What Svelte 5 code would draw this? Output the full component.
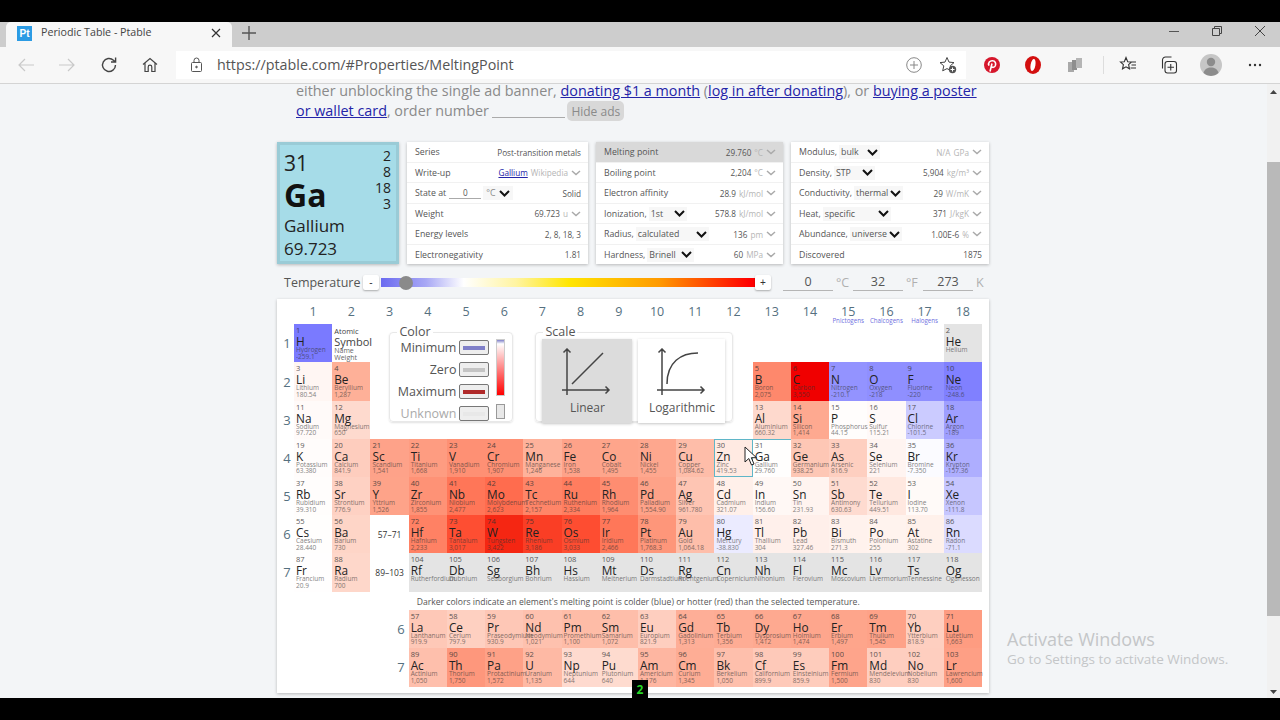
<script>
  // num sym name value (empty value = unknown, shown grey)
  const raw = `1 H Hydrogen -259.1|2 He Helium|3 Li Lithium 180.54|4 Be Beryllium 1,287|5 B Boron 2,075|6 C Carbon 3,550|7 N Nitrogen -210.1|8 O Oxygen -218|9 F Fluorine -220|10 Ne Neon -248.6|11 Na Sodium 97.720|12 Mg Magnesium 650|13 Al Aluminium 660.32|14 Si Silicon 1,414|15 P Phosphorus 44.15|16 S Sulfur 115.21|17 Cl Chlorine -101.5|18 Ar Argon -189|19 K Potassium 63.380|20 Ca Calcium 841.9|21 Sc Scandium 1,541|22 Ti Titanium 1,668|23 V Vanadium 1,910|24 Cr Chromium 1,907|25 Mn Manganese 1,246|26 Fe Iron 1,538|27 Co Cobalt 1,495|28 Ni Nickel 1,455|29 Cu Copper 1,084.62|30 Zn Zinc 419.53|31 Ga Gallium 29.760|32 Ge Germanium 938.25|33 As Arsenic 816.9|34 Se Selenium 221|35 Br Bromine -7.350|36 Kr Krypton -157.36|37 Rb Rubidium 39.310|38 Sr Strontium 776.9|39 Y Yttrium 1,526|40 Zr Zirconium 1,855|41 Nb Niobium 2,477|42 Mo Molybdenum 2,623|43 Tc Technetium 2,157|44 Ru Ruthenium 2,334|45 Rh Rhodium 1,964|46 Pd Palladium 1,554.90|47 Ag Silver 961.780|48 Cd Cadmium 321.07|49 In Indium 156.60|50 Sn Tin 231.93|51 Sb Antimony 630.63|52 Te Tellurium 449.51|53 I Iodine 113.70|54 Xe Xenon -111.8|55 Cs Caesium 28.440|56 Ba Barium 730|57 La Lanthanum 919.9|58 Ce Cerium 797.9|59 Pr Praseodymium 930.9|60 Nd Neodymium 1,021|61 Pm Promethium 1,100|62 Sm Samarium 1,072|63 Eu Europium 821.9|64 Gd Gadolinium 1,313|65 Tb Terbium 1,356|66 Dy Dysprosium 1,412|67 Ho Holmium 1,474|68 Er Erbium 1,497|69 Tm Thulium 1,545|70 Yb Ytterbium 818.9|71 Lu Lutetium 1,663|72 Hf Hafnium 2,233|73 Ta Tantalum 3,017|74 W Tungsten 3,422|75 Re Rhenium 3,186|76 Os Osmium 3,033|77 Ir Iridium 2,466|78 Pt Platinum 1,768.3|79 Au Gold 1,064.18|80 Hg Mercury -38.830|81 Tl Thallium 304|82 Pb Lead 327.46|83 Bi Bismuth 271.3|84 Po Polonium 255|85 At Astatine 302|86 Rn Radon -71.1|87 Fr Francium 20.9|88 Ra Radium 700|89 Ac Actinium 1,050|90 Th Thorium 1,750|91 Pa Protactinium 1,572|92 U Uranium 1,135|93 Np Neptunium 644|94 Pu Plutonium 640|95 Am Americium 1,176|96 Cm Curium 1,345|97 Bk Berkelium 1,050|98 Cf Californium 899.9|99 Es Einsteinium 859.9|100 Fm Fermium 1,500|101 Md Mendelevium 830|102 No Nobelium 830|103 Lr Lawrencium 1,600|104 Rf Rutherfordium|105 Db Dubnium|106 Sg Seaborgium|107 Bh Bohrium|108 Hs Hassium|109 Mt Meitnerium|110 Ds Darmstadtium|111 Rg Roentgenium|112 Cn Copernicium|113 Nh Nihonium|114 Fl Flerovium|115 Mc Moscovium|116 Lv Livermorium|117 Ts Tennessine|118 Og Oganesson`;

  // hot side of the scale, fraction of 3550 °C -> rgb
  const stops = [
    [0, [255, 255, 255]], [0.1, [255, 238, 232]], [0.2, [254, 214, 201]], [0.35, [254, 178, 155]],
    [0.5, [254, 150, 122]], [0.7, [255, 118, 88]], [0.85, [254, 78, 50]], [0.96, [245, 42, 20]], [1, [240, 0, 0]]
  ];

  function colorFor(v) {
    if (v === null) return '#e4e4e4';
    if (v < 0) {
      const c = Math.round(255 - (-v / 273) * 140);
      return `rgb(${c},${c},255)`;
    }
    const t = Math.min(v / 3550, 1);
    for (let i = 1; i < stops.length; i++) {
      if (t <= stops[i][0]) {
        const [a, ca] = stops[i - 1];
        const [b, cb] = stops[i];
        const f = (t - a) / (b - a);
        const m = ca.map((x, k) => Math.round(x + (cb[k] - x) * f));
        return `rgb(${m.join(',')})`;
      }
    }
    return '#f00';
  }

  function place(n) {
    // grid: column 1 is the period label, row 1 the group labels, row 9 the note
    if (n === 1) return [1, 1];
    if (n === 2) return [18, 1];
    if (n <= 4) return [n - 2, 2];
    if (n <= 10) return [n + 8, 2];
    if (n <= 12) return [n - 10, 3];
    if (n <= 18) return [n, 3];
    if (n <= 36) return [n - 18, 4];
    if (n <= 54) return [n - 36, 5];
    if (n <= 56) return [n - 54, 6];
    if (n <= 71) return [n - 53, 9];
    if (n <= 86) return [n - 68, 6];
    if (n <= 88) return [n - 86, 7];
    if (n <= 103) return [n - 85, 10];
    return [n - 100, 7];
  }

  const elements = raw.split('|').map((s) => {
    const [num, sym, name, value] = s.split(' ');
    const [col, row] = place(+num);
    const v = value ? parseFloat(value.replace(/,/g, '')) : null;
    return { num, sym, name, value: value || '', col, row, bg: colorFor(v) };
  });

  const groups = Array.from({ length: 18 }, (_, i) => i + 1);
  const families = { 15: 'Pnictogens', 16: 'Chalcogens', 17: 'Halogens' };
  const periods = [1, 2, 3, 4, 5, 6, 7];

  const cardA = [
    { label: 'Series', value: 'Post-transition metals' },
    { label: 'Write-up', link: 'Gallium', value: 'Wikipedia', faint: true, more: true },
    { label: 'State at', state: true, value: 'Solid' },
    { label: 'Weight', value: '69.723', unit: 'u', more: true },
    { label: 'Energy levels', value: '2, 8, 18, 3' },
    { label: 'Electronegativity', value: '1.81' }
  ];
  const cardB = [
    { label: 'Melting point', value: '29.760', unit: '°C', more: true, on: true },
    { label: 'Boiling point', value: '2,204', unit: '°C', more: true },
    { label: 'Electron affinity', value: '28.9', unit: 'kJ/mol', more: true },
    { label: 'Ionization,', pick: '1st', w: 38, value: '578.8', unit: 'kJ/mol', more: true },
    { label: 'Radius,', pick: 'calculated', w: 73, value: '136', unit: 'pm', more: true },
    { label: 'Hardness,', pick: 'Brinell', w: 47, value: '60', unit: 'MPa', more: true }
  ];
  const cardC = [
    { label: 'Modulus,', pick: 'bulk', w: 41, value: 'N/A', unit: 'GPa', more: true, faintVal: true },
    { label: 'Density,', pick: 'STP', w: 41, value: '5,904', unit: 'kg/m³', more: true },
    { label: 'Conductivity,', pick: 'thermal', w: 49, value: '29', unit: 'W/mK', more: true },
    { label: 'Heat,', pick: 'specific', w: 68, value: '371', unit: 'J/kgK', more: true },
    { label: 'Abundance,', pick: 'universe', w: 52, value: '1.00E-6', unit: '%', more: true },
    { label: 'Discovered', value: '1875' }
  ];
  const cards = [cardA, cardB, cardC];

  const swatches = [
    { label: 'Minimum', c: '#7f7fc8' },
    { label: 'Zero', c: '#c4c4c4' },
    { label: 'Maximum', c: '#b02a2a' },
    { label: 'Unknown', c: '#e8e8e8', off: true }
  ];
</script>

<div class="screen">
  <div class="tabstrip">
    <div class="tab">
      <span class="favicon">Pt</span>
      <span class="tab-title">Periodic Table - Ptable</span>
      <svg class="tab-x" width="10" height="10" viewBox="0 0 10 10"><path d="M1 1l8 8M9 1l-8 8" stroke="#333" stroke-width="1.2" /></svg>
    </div>
    <svg class="tab-plus" width="14" height="14" viewBox="0 0 14 14"><path d="M7 0v14M0 7h14" stroke="#555" stroke-width="1.4" /></svg>
    <div class="win-controls">
      <svg width="12" height="12" viewBox="0 0 12 12"><path d="M1 6.5h10" stroke="#555" /></svg>
      <svg width="12" height="12" viewBox="0 0 12 12" fill="none" stroke="#444"><path d="M1.5 3.5h7v7h-7zM3.5 3.5v-2h7v7h-2" /></svg>
      <svg width="12" height="12" viewBox="0 0 12 12"><path d="M1 1l10 10M11 1L1 11" stroke="#444" /></svg>
    </div>
  </div>

  <div class="toolbar">
    <div class="nav-btns">
      <svg width="18" height="16" viewBox="0 0 18 16" fill="none" stroke="#c9c9c9" stroke-width="1.2"><path d="M17 8H2M8 2L2 8l6 6" /></svg>
      <svg width="18" height="16" viewBox="0 0 18 16" fill="none" stroke="#c9c9c9" stroke-width="1.2"><path d="M1 8h15M10 2l6 6-6 6" /></svg>
      <svg class="reload" width="18" height="18" viewBox="0 0 18 18" fill="none" stroke="#444" stroke-width="1.4"><path d="M15.5 9a6.5 6.5 0 1 1-2-4.7L15.5 6M15.6 1.5V6H11" /></svg>
      <svg class="home" width="16" height="16" viewBox="0 0 16 16" fill="none" stroke="#444" stroke-width="1.2"><path d="M1 7.5L8 1.5l7 6M3 6v8.5h3.2V10a1.8 1.8 0 0 1 3.6 0v4.5H13V6" /></svg>
    </div>
    <div class="address">
      <svg width="13" height="16" viewBox="0 0 13 16" fill="none" stroke="#555"><rect x="1.5" y="5.5" width="10" height="9" rx="1" /><path d="M4 5.5V3.5a2.5 2.5 0 0 1 5 0v2" /><circle cx="6.5" cy="10" r="0.8" fill="#555" /></svg>
      <span class="url">https://ptable.com/#Properties/MeltingPoint</span>
      <svg class="addr-add" width="16" height="16" viewBox="0 0 16 16" fill="none" stroke="#888"><circle cx="8" cy="8" r="7.3" /><path d="M8 4v8M4 8h8" /></svg>
      <svg class="addr-star" width="18" height="18" viewBox="0 0 18 18"><path d="M8 1.5l2 4.6 5 .5-3.8 3.3 1.1 4.9L8 12.6l-4.3 2.2 1.1-4.9L1 6.6l5-.5z" fill="none" stroke="#444" /><circle cx="13.5" cy="13.5" r="3.7" fill="#555" /><path d="M13.5 11.5v4M11.5 13.5h4" stroke="#fff" /></svg>
    </div>
    <div class="ext-btns">
      <svg width="18" height="18" viewBox="0 0 18 18"><circle cx="9" cy="9" r="8" fill="#d6172c" /><path d="M7 15.5l2-8M6 9.6C4.6 6.8 7 4.6 9.5 4.8c2.7.2 3.8 2.6 2.8 5-.8 1.8-3 2-3.8.6" fill="none" stroke="#fff" stroke-width="1.6" /></svg>
      <svg width="16" height="18" viewBox="0 0 16 18"><ellipse cx="8" cy="9" rx="8" ry="9" fill="#d30f0f" /><ellipse cx="8" cy="9" rx="2.4" ry="6" fill="#fff" transform="rotate(10 8 9)" /></svg>
      <svg width="16" height="16" viewBox="0 0 16 16" fill="#a9a9a9"><path d="M1 5h6v10H1z" /><path d="M5 3h5v10H5z" fill="#8e8e8e" /><path d="M9 1h6v10H9z" fill="#b5b5b5" /></svg>
      <span class="ext-div"></span>
      <svg width="18" height="18" viewBox="0 0 18 18" fill="none" stroke="#333" stroke-width="1.1"><path d="M7 1.5l1.7 4.2 3.8.3-2.9 2.6.9 4.2L7 10.8l-3.5 2 .9-4.2L1.5 6l3.8-.3zM12 6h5M12.5 9H17M11.5 12H17" /></svg>
      <svg width="18" height="18" viewBox="0 0 18 18" fill="none" stroke="#333" stroke-width="1.1"><rect x="5" y="5.5" width="11.5" height="11.5" rx="2.5" /><path d="M2.5 12.500V4a3 3 0 0 1 3-3h6M10.750 8v6.500M7.500 11.250H14" /></svg>
      <svg width="22" height="22" viewBox="0 0 22 22"><circle cx="11" cy="11" r="11" fill="#c6c6c6" /><circle cx="11" cy="8" r="4.2" fill="#8c8c8c" /><path d="M3.5 19c1-4 4-5.500 7.500-5.500s6.500 1.500 7.500 5.500a11 11 0 0 1-15 0z" fill="#8c8c8c" /></svg>
      <svg width="14" height="4" viewBox="0 0 14 4" fill="#333"><circle cx="2" cy="2" r="1.2" /><circle cx="7" cy="2" r="1.2" /><circle cx="12" cy="2" r="1.2" /></svg>
    </div>
  </div>

  <div class="viewport">
    <main class="page">
      <p class="ad-note">
        either unblocking the single ad banner, <a href="#d">donating $1 a month</a> (<a href="#l">log in after donating</a>), or <a href="#p">buying a poster</a><br />
        <a href="#p">or wallet card</a>, order number <span class="order-input"></span> <button class="hide-ads">Hide ads</button>
      </p>

      <section class="detail">
        <div class="big-cell">
          <div class="big-left">
            <div class="big-num">31</div>
            <div class="big-sym">Ga</div>
            <div class="big-name">Gallium</div>
            <div class="big-name">69.723</div>
          </div>
          <div class="shells"><span>2</span><span>8</span><span>18</span><span>3</span></div>
        </div>
        {#each cards as card}
          <div class="info-card">
            {#each card as row}
              <div class="info-row" class:on={row.on}>
                <span class="info-label">{row.label}</span>
                {#if row.pick}
                  <span class="pick" style="width:{row.w}px">{row.pick}<svg width="11" height="7" viewBox="0 0 11 7" fill="none" stroke="#111" stroke-width="2"><path d="M1 1l4.5 4.5L10 1" /></svg></span>
                {/if}
                {#if row.state}
                  <span class="state-input">0</span>
                  <span class="pick deg">°C<svg width="11" height="7" viewBox="0 0 11 7" fill="none" stroke="#111" stroke-width="2"><path d="M1 1l4.5 4.5L10 1" /></svg></span>
                {/if}
                <span class="info-val">
                  {#if row.link}<a href="#g">{row.link}</a>{/if}
                  <span class:faint={row.faint || row.faintVal}>{row.value}</span>
                  {#if row.unit}<span class="faint">{row.unit}</span>{/if}
                  {#if row.more}<svg width="10" height="6" viewBox="0 0 10 6" fill="none" stroke="#aaa" stroke-width="1.5"><path d="M1 1l4 3.500L9 1" /></svg>{/if}
                </span>
              </div>
            {/each}
          </div>
        {/each}
      </section>

      <section class="temp-row">
        <span class="temp-label">Temperature</span>
        <button class="step">-</button>
        <div class="slider"><span class="thumb"></span></div>
        <button class="step plus">+</button>
        <div class="temp-fields">
          <span class="temp-input">0</span><span class="temp-unit">°C</span>
          <span class="temp-input">32</span><span class="temp-unit">°F</span>
          <span class="temp-input">273</span><span class="temp-unit">K</span>
        </div>
      </section>

      <section class="table-card">
        <div class="ptable">
          {#each groups as g}
            <div class="group-label" style="grid-column:{g + 1};grid-row:1">
              {g}
              {#if families[g]}<span class="family">{families[g]}</span>{/if}
            </div>
          {/each}
          {#each periods as p}
            <div class="period-label" style="grid-column:1;grid-row:{p + 1}">{p}</div>
          {/each}

          <div class="key" style="grid-column:3;grid-row:2">
            <div class="key-num">Atomic</div>
            <div class="key-sym">Symbol</div>
            <div class="key-sm">Name</div>
            <div class="key-sm">Weight</div>
          </div>

          <div class="legend-area">
            <fieldset class="color-set">
              <legend>Color</legend>
              <div class="swatch-wrap">
                <div class="swatch-rows">
                  {#each swatches as s}
                    <div class="swatch-row" class:off={s.off}>
                      <span>{s.label}</span>
                      <span class="swatch"><i style="background:{s.c}"></i></span>
                    </div>
                  {/each}
                </div>
                <div class="ramps">
                  <span class="ramp"></span>
                  <span class="ramp-unknown"></span>
                </div>
              </div>
            </fieldset>
            <fieldset class="scale-set">
              <legend>Scale</legend>
              <div class="scale-btns">
                <div class="scale-btn on">
                  <svg width="50" height="48" viewBox="0 0 50 48" fill="none" stroke="#444" stroke-width="1.5"><path d="M0 42h47M43.500 38.500L47 42l-3.500 3.500M5 47V1M1.500 4.500L5 1l3.500 3.500M10 36L41 5" /></svg>
                  <span>Linear</span>
                </div>
                <div class="scale-btn">
                  <svg width="50" height="48" viewBox="0 0 50 48" fill="none" stroke="#444" stroke-width="1.5"><path d="M0 42h47M43.500 38.500L47 42l-3.500 3.500M5 47V1M1.500 4.500L5 1l3.500 3.500M10 36C10 14 24 5 41 5" /></svg>
                  <span>Logarithmic</span>
                </div>
              </div>
            </fieldset>
          </div>

          <div class="range" style="grid-column:4;grid-row:7">57–71</div>
          <div class="range" style="grid-column:4;grid-row:8">89–103</div>

          {#each elements as el}
            <div
              class="el"
              class:hover={el.num === '30'}
              class:sel={el.num === '31'}
              style="grid-column:{el.col + 1};grid-row:{el.row + 1};background:{el.bg}"
            >
              <div class="el-num">{el.num}</div>
              <div class="el-sym">{el.sym}</div>
              <div class="el-name">{el.name}</div>
              {#if el.value}<div class="el-val">{el.value}</div>{/if}
            </div>
          {/each}

          <p class="note">Darker colors indicate an element's melting point is colder (blue) or hotter (red) than the selected temperature.</p>
          <div class="period-label sub" style="grid-row:10">6</div>
          <div class="period-label sub" style="grid-row:11">7</div>
        </div>
      </section>
    </main>

    <div class="scrollbar">
      <svg width="7" height="4" viewBox="0 0 7 4" fill="#444"><path d="M3.5 0L7 4H0z" /></svg>
      <span class="scroll-thumb"></span>
      <svg class="scroll-down" width="7" height="4" viewBox="0 0 7 4" fill="#444"><path d="M3.5 4L7 0H0z" /></svg>
    </div>
  </div>

  <div class="blackbar"></div>

  <!-- overlays from the recording: watermark, cursor, key badge -->
  <div class="watermark">
    <div class="wm-big">Activate Windows</div>
    <div class="wm-small">Go to Settings to activate Windows.</div>
  </div>
  <svg class="cursor" width="14" height="20" viewBox="0 0 14 20"><path d="M1 1v15l3.800-3.500L7.500 19l2.500-1-2.700-6.300H12.500z" fill="#fff" stroke="#222" /></svg>
  <div class="key-badge">2</div>
</div>

<style>
  :global(body) {
    margin: 0;
    background: #000;
  }

  .screen {
    position: relative;
    width: 1280px;
    height: 720px;
    padding-top: 22px;
    box-sizing: border-box;
    background: #000;
    display: flex;
    flex-direction: column;
    overflow: hidden;
    font-family: "Open Sans", "Noto Sans", sans-serif;
    color: #333;
  }

  .tabstrip {
    height: 25px;
    background: #cdcdcd;
    display: flex;
    align-items: center;
    flex-shrink: 0;
  }

  .tab {
    margin-left: 6px;
    width: 226px;
    height: 25px;
    box-sizing: border-box;
    background: #f7f7f7;
    border-radius: 5px 5px 0 0;
    display: flex;
    align-items: center;
    padding: 0 11px 3px;
  }

  .favicon {
    width: 15px;
    height: 15px;
    background: #2b9be4;
    color: #fff;
    font-size: 10px;
    font-weight: 700;
    line-height: 15px;
    text-align: center;
    font-family: "Liberation Sans", sans-serif;
  }

  .tab-title {
    margin: -2px 0 0 9px;
    font-size: 10.7px;
    color: #444;
    flex: 1;
  }

  .tab-plus {
    margin: -3px 0 0 10px;
  }

  .win-controls {
    margin-left: auto;
    margin-right: 14px;
    display: flex;
    gap: 31px;
    margin-top: -7px;
  }

  .toolbar {
    height: 37px;
    background: #f7f7f7;
    border-bottom: 1px solid #d4d4d4;
    box-sizing: border-box;
    display: flex;
    align-items: center;
    flex-shrink: 0;
    padding-left: 17px;
  }

  .nav-btns {
    display: flex;
    align-items: center;
    gap: 23px;
    width: 159px;
  }

  .reload {
    margin-left: 1px;
  }

  .home {
    margin-left: 1px;
  }

  .address {
    width: 790px;
    height: 28px;
    margin-top: -1px;
    background: #fff;
    display: flex;
    align-items: center;
    padding: 0 9px 0 14px;
    box-sizing: border-box;
  }

  .url {
    margin-left: 14px;
    font-size: 14.3px;
    color: #555;
    flex: 1;
  }

  .addr-add {
    margin-right: 17px;
  }

  .ext-btns {
    display: flex;
    align-items: center;
    margin-left: 17px;
    gap: 24px;
  }

  .ext-btns > :nth-child(3) {
    margin-left: 2px;
  }

  .ext-div {
    width: 1px;
    height: 18px;
    background: #ddd;
    margin: 0 -9px 0 -4px;
  }

  .ext-btns > :nth-child(6) {
    margin-left: -1px;
  }

  .ext-btns > :nth-child(7) {
    margin-left: -2px;
  }

  .ext-btns > :nth-child(8) {
    margin-left: 2px;
  }

  .viewport {
    flex: 1;
    min-height: 0;
    display: flex;
    background: #f3f5f7;
  }

  .page {
    flex: 1;
    min-width: 0;
    overflow: hidden;
    padding-left: 277px;
  }

  .ad-note {
    margin: -3px 0 0 19px;
    font-size: 14.35px;
    line-height: 19.5px;
    color: #8a8a8a;
    white-space: nowrap;
  }

  a {
    color: #2424a8;
  }

  .order-input {
    display: inline-block;
    width: 73px;
    height: 14px;
    border-bottom: 1px solid #aaa;
    margin: 0 0 -2px -1px;
  }

  .hide-ads {
    font: inherit;
    font-size: 12px;
    color: #8a8a8a;
    background: #d8d8d8;
    border: 0;
    border-radius: 5px;
    height: 20px;
    width: 57px;
    padding: 0;
    margin-left: -1px;
  }

  .detail {
    display: flex;
    align-items: stretch;
    gap: 8px;
    margin-top: 21px;
    height: 122px;
  }

  .big-cell {
    width: 122px;
    box-sizing: border-box;
    background: #a6dce8;
    border: 3px solid #9acbd6;
    padding: 5px 5px 2px 4px;
    display: flex;
    justify-content: space-between;
    color: #222;
    box-shadow: 0 1px 3px rgba(0, 0, 0, 0.25);
  }

  .big-num {
    font-size: 21px;
    line-height: 26px;
  }

  .big-sym {
    font-size: 32px;
    font-weight: 700;
    line-height: 38px;
    color: #111;
  }

  .big-name {
    font-size: 17px;
    line-height: 23px;
  }

  .shells {
    display: flex;
    flex-direction: column;
    align-items: flex-end;
    font-size: 14px;
    line-height: 16px;
    margin-top: -2px;
  }

  .info-card {
    width: 181px;
    background: #fff;
    box-shadow: 0 1px 3px rgba(0, 0, 0, 0.25);
    display: flex;
    flex-direction: column;
  }

  .info-card:nth-child(3) {
    width: 187px;
  }

  .info-card:nth-child(4) {
    width: 198px;
  }

  .info-row {
    flex: 1;
    display: flex;
    align-items: center;
    padding: 0 7px 0 8px;
    border-bottom: 1px solid #f1f1f1;
    font-size: 8.2px;
    color: #555;
    white-space: nowrap;
  }

  .info-label {
    font-size: 8.8px;
  }

  .info-row:last-child {
    border-bottom: 0;
  }

  .info-row.on {
    background: #d9d9d9;
  }

  .pick {
    display: inline-flex;
    align-items: center;
    justify-content: space-between;
    box-sizing: border-box;
    background: #f7f7f7;
    font-size: 8.8px;
    margin-left: 2px;
    padding: 1px 2px;
  }

  .deg {
    padding: 1px 3px;
    gap: 3px;
    color: #888;
  }

  .state-input {
    width: 32px;
    margin-left: 3px;
    text-align: center;
    border-bottom: 1px solid #aaa;
  }

  .info-val {
    margin-left: auto;
    display: inline-flex;
    align-items: center;
    gap: 3px;
  }

  .faint {
    color: #b5b5b5;
  }

  .temp-row {
    height: 35px;
    box-sizing: border-box;
    padding: 2px 0 0 7px;
    display: flex;
    align-items: center;
  }

  .temp-label {
    font-size: 12.5px;
    color: #555;
    width: 79px;
  }

  .step {
    width: 16px;
    height: 15px;
    padding: 0;
    border: 0;
    background: #fff;
    border-radius: 2px;
    box-shadow: 0 1px 2px rgba(0, 0, 0, 0.3);
    font-size: 10px;
    line-height: 15px;
    color: #333;
    z-index: 1;
  }

  .slider {
    position: relative;
    width: 376px;
    height: 9px;
    margin-left: 2px;
    background: linear-gradient(90deg, #6a6af0 0%, #a8a8f5 12%, #ffffff 22%, #fff4a0 36%, #ffe600 50%, #ff9a00 74%, #f00 98%);
  }

  .thumb {
    position: absolute;
    left: 18px;
    top: -2.5px;
    width: 14px;
    height: 14px;
    border-radius: 50%;
    background: #8a8a8a;
  }

  .plus {
    margin-left: -2px;
  }

  .temp-fields {
    display: flex;
    align-items: center;
    margin-left: 12px;
    font-size: 12.5px;
    color: #555;
  }

  .temp-input {
    width: 50px;
    text-align: center;
    border-bottom: 1px solid #b5b5b5;
    line-height: 16px;
  }

  .temp-unit {
    color: #b0b0b0;
    width: 17px;
    margin-left: 3px;
  }

  .table-card {
    width: 712px;
    height: 394px;
    background: #fff;
    box-shadow: 0 1px 3px rgba(0, 0, 0, 0.25);
    overflow: hidden;
    padding-left: 17px;
    box-sizing: border-box;
  }

  .ptable {
    display: grid;
    grid-template-columns: 0 repeat(18, 38.22px);
    grid-template-rows: 25px repeat(7, 38.2px) 18px repeat(2, 38.5px);
  }

  .group-label {
    position: relative;
    text-align: center;
    font-size: 12.5px;
    line-height: 26px;
    color: #557080;
  }

  .family {
    position: absolute;
    left: -4px;
    right: -4px;
    top: 18px;
    font-size: 6.2px;
    line-height: 8px;
    color: #6f6fe0;
    white-space: nowrap;
  }

  .period-label {
    font-size: 13px;
    color: #557080;
    width: 16px;
    margin-left: -15px;
    display: flex;
    align-items: center;
    justify-content: center;
  }

  .period-label.sub {
    grid-column: 4;
    width: auto;
    margin-left: 0;
    justify-content: flex-end;
    padding-right: 4px;
  }

  .key {
    overflow: visible;
    padding: 2px 0 0 2px;
    color: #444;
    white-space: nowrap;
  }

  .key-num {
    font-size: 7.5px;
    line-height: 9px;
    padding-top: 1px;
  }

  .key-sym {
    font-size: 11px;
    line-height: 11px;
  }

  .key-sm {
    font-size: 7px;
    line-height: 7px;
    color: #666;
  }

  .legend-area {
    grid-column: 4 / 14;
    grid-row: 2 / 5;
    display: flex;
    align-items: flex-start;
    gap: 22px;
    padding: 0 0 0 19px;
    margin-top: 1px;
    z-index: 1;
  }

  fieldset {
    margin: 0;
    padding: 0;
    border: 1px solid #e8e8e8;
    border-radius: 4px;
    box-shadow: 0 1px 2px rgba(0, 0, 0, 0.12);
    background: #fff;
    height: 97px;
    box-sizing: border-box;
  }

  legend {
    font-size: 12.5px;
    line-height: 14px;
    padding: 0 2px;
    margin-left: 7px;
    color: #555;
  }

  .color-set {
    width: 124px;
  }

  .swatch-wrap {
    display: flex;
    padding: 1px 7px 0 0;
    justify-content: space-between;
  }

  .swatch-rows {
    flex: 1;
    display: flex;
    flex-direction: column;
    gap: 7px;
  }

  .swatch-row {
    display: flex;
    align-items: center;
    justify-content: flex-end;
    gap: 3px;
    font-size: 12.5px;
    line-height: 15px;
    color: #555;
    padding-right: 7px;
  }

  .swatch-row.off {
    color: #aaa;
  }

  .swatch {
    width: 30px;
    height: 15px;
    box-sizing: border-box;
    background: #eee;
    border: 1px solid #777;
    border-radius: 2px;
    display: flex;
    align-items: center;
    justify-content: center;
  }

  .swatch i {
    width: 22px;
    height: 4px;
    display: block;
  }

  .ramps {
    width: 9px;
    display: flex;
    flex-direction: column;
    gap: 8px;
    margin-top: -1px;
  }

  .ramp {
    height: 57px;
    border: 1px solid #ccc;
    box-sizing: border-box;
    background: linear-gradient(180deg, #7f7fc8 0, #fff 7%, #f00 100%);
  }

  .ramp-unknown {
    height: 15px;
    border: 1px solid #999;
    box-sizing: border-box;
    background: #e8e8e8;
  }

  .scale-set {
    width: 198px;
  }

  .scale-btns {
    display: flex;
    gap: 6px;
    padding: 0 0 0 6px;
  }

  .scale-btn {
    width: 87px;
    height: 84px;
    box-sizing: border-box;
    padding-top: 9px;
    background: #fff;
    box-shadow: 0 1px 3px rgba(0, 0, 0, 0.2);
    display: flex;
    flex-direction: column;
    align-items: center;
    font-size: 12px;
    color: #555;
    gap: 3px;
  }

  .scale-btn.on {
    width: 90px;
    background: #dcdcdc;
  }

  .range {
    font-size: 8.5px;
    display: flex;
    align-items: center;
    justify-content: center;
    color: #333;
  }

  .el {
    box-sizing: border-box;
    padding: 2px 0 0 2px;
    overflow: visible;
    white-space: nowrap;
    color: #333;
  }

  .el.hover {
    box-shadow: inset 0 0 0 1px #5fb6c8;
  }

  .el.sel {
    box-shadow: inset 0 1px 0 #5fb6c8;
  }

  .el-num {
    font-size: 7.5px;
    line-height: 9px;
    opacity: 0.8;
  }

  .el-sym {
    font-size: 11.8px;
    line-height: 12px;
    color: #222;
  }

  .el-name,
  .el-val {
    font-size: 6.5px;
    line-height: 6.5px;
    opacity: 0.62;
  }

  .note {
    grid-column: 5 / 20;
    grid-row: 9;
    margin: 0;
    padding-left: 8px;
    font-size: 8.6px;
    line-height: 20px;
    color: #555;
    white-space: nowrap;
  }

  .scrollbar {
    width: 13px;
    background: #f1f1f1;
    position: relative;
    display: flex;
    flex-direction: column;
    align-items: center;
    padding-top: 6px;
    box-sizing: border-box;
  }

  .scroll-thumb {
    width: 13px;
    height: 454px;
    margin-top: 68px;
    background: #b9b9b9;
  }

  .scroll-down {
    margin-top: auto;
    margin-bottom: 4px;
  }

  .blackbar {
    height: 22px;
    background: #000;
    flex-shrink: 0;
  }

  .watermark {
    position: absolute;
    left: 1007px;
    top: 629px;
    color: #c4c6c8;
    font-family: "Open Sans", sans-serif;
  }

  .wm-big {
    font-size: 18px;
    line-height: 21px;
  }

  .wm-small {
    font-size: 13.5px;
    line-height: 19px;
  }

  .cursor {
    position: absolute;
    left: 744px;
    top: 446px;
  }

  .key-badge {
    position: absolute;
    left: 632px;
    top: 680px;
    width: 16px;
    height: 18px;
    background: #000;
    color: #27d627;
    font-size: 12px;
    font-weight: 700;
    line-height: 20px;
    text-align: center;
  }
</style>
